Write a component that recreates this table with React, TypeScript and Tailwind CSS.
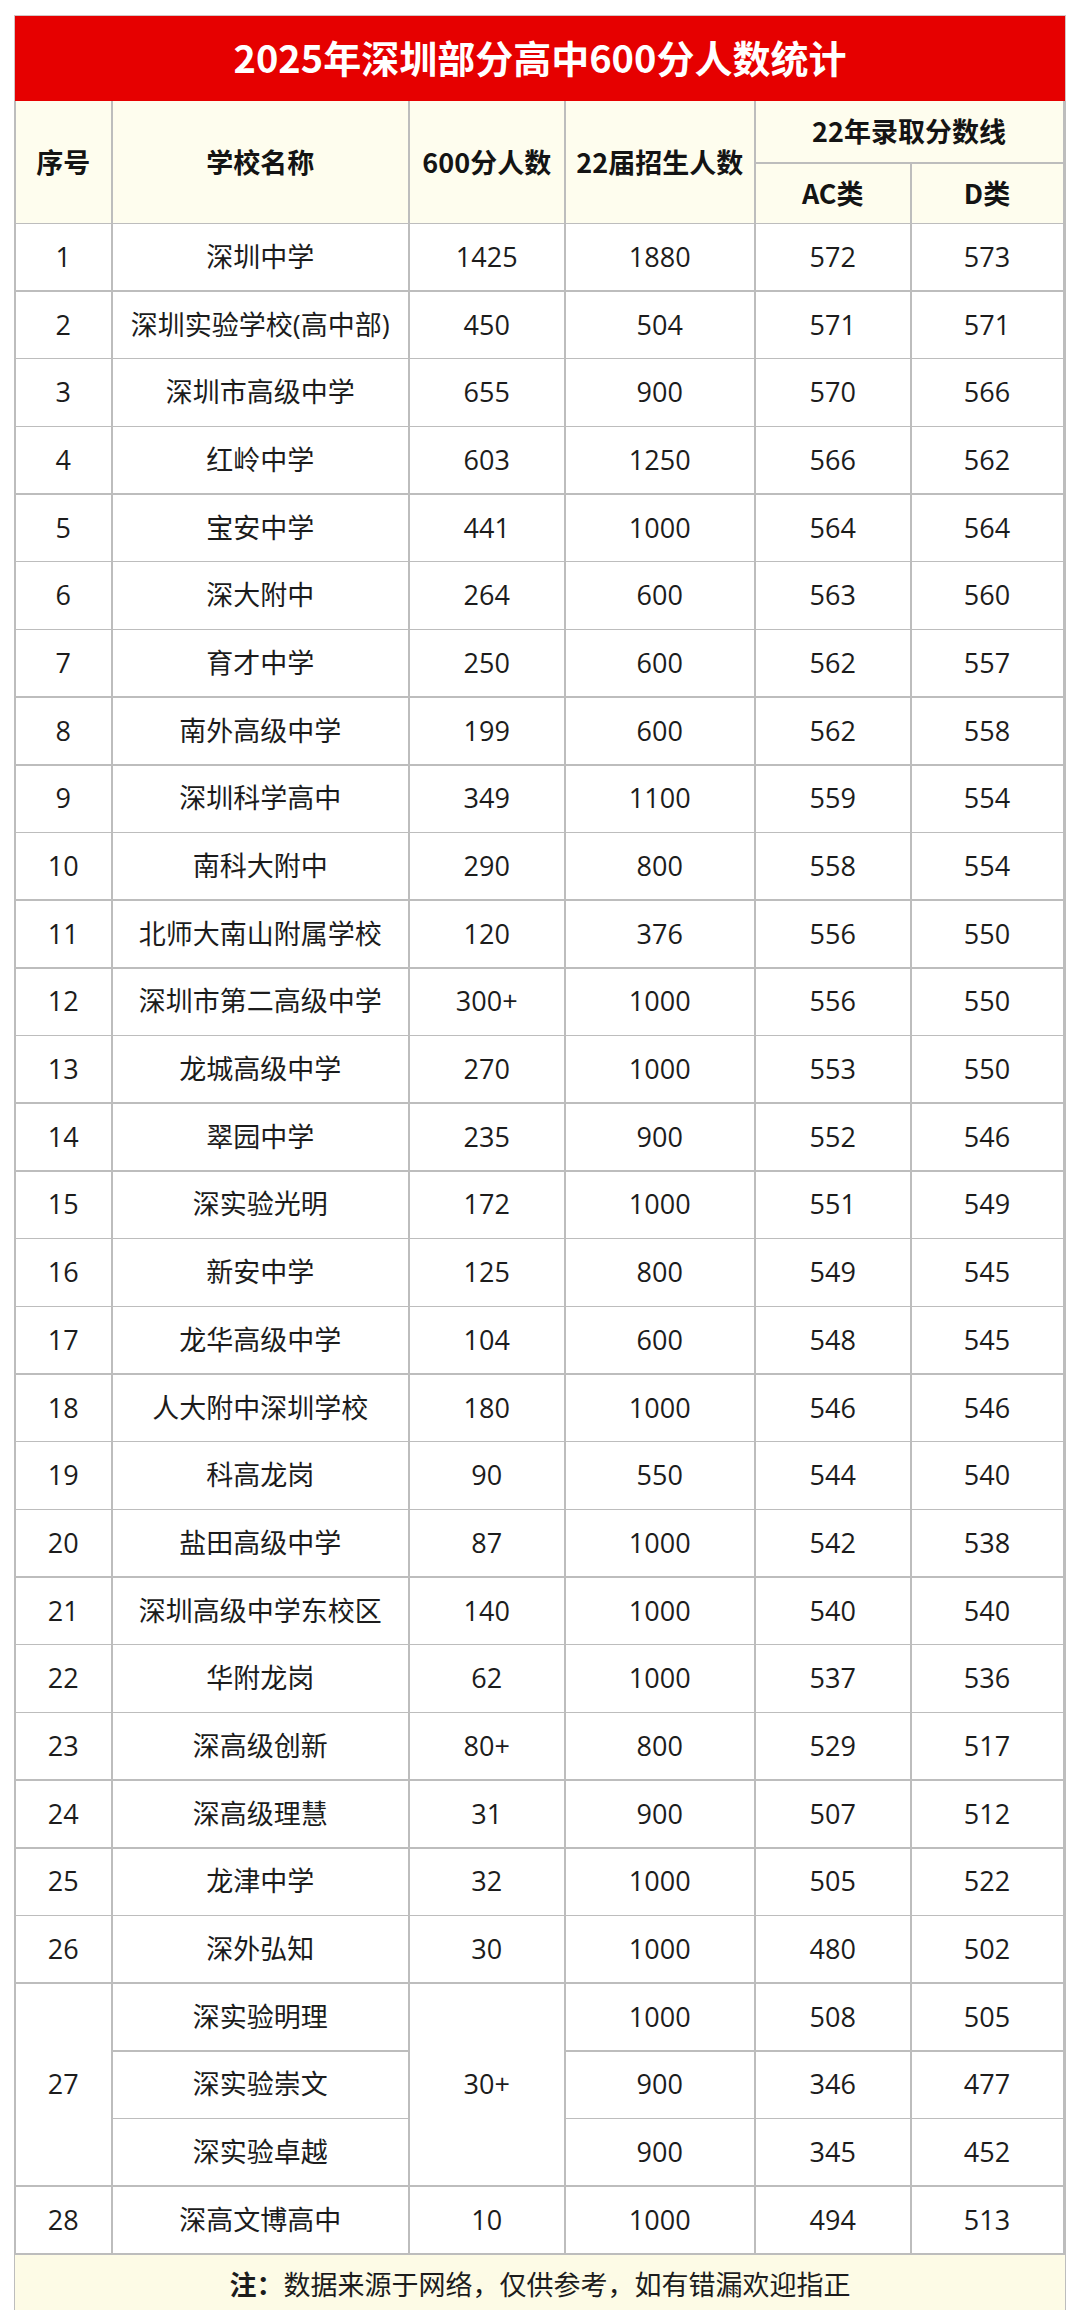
import React from "react";

type Row = { no: string; name: string; n600: string; quota: string; ac: string; d: string };

const rows: Row[] = [
  { no: "1", name: "深圳中学", n600: "1425", quota: "1880", ac: "572", d: "573" },
  { no: "2", name: "深圳实验学校(高中部)", n600: "450", quota: "504", ac: "571", d: "571" },
  { no: "3", name: "深圳市高级中学", n600: "655", quota: "900", ac: "570", d: "566" },
  { no: "4", name: "红岭中学", n600: "603", quota: "1250", ac: "566", d: "562" },
  { no: "5", name: "宝安中学", n600: "441", quota: "1000", ac: "564", d: "564" },
  { no: "6", name: "深大附中", n600: "264", quota: "600", ac: "563", d: "560" },
  { no: "7", name: "育才中学", n600: "250", quota: "600", ac: "562", d: "557" },
  { no: "8", name: "南外高级中学", n600: "199", quota: "600", ac: "562", d: "558" },
  { no: "9", name: "深圳科学高中", n600: "349", quota: "1100", ac: "559", d: "554" },
  { no: "10", name: "南科大附中", n600: "290", quota: "800", ac: "558", d: "554" },
  { no: "11", name: "北师大南山附属学校", n600: "120", quota: "376", ac: "556", d: "550" },
  { no: "12", name: "深圳市第二高级中学", n600: "300+", quota: "1000", ac: "556", d: "550" },
  { no: "13", name: "龙城高级中学", n600: "270", quota: "1000", ac: "553", d: "550" },
  { no: "14", name: "翠园中学", n600: "235", quota: "900", ac: "552", d: "546" },
  { no: "15", name: "深实验光明", n600: "172", quota: "1000", ac: "551", d: "549" },
  { no: "16", name: "新安中学", n600: "125", quota: "800", ac: "549", d: "545" },
  { no: "17", name: "龙华高级中学", n600: "104", quota: "600", ac: "548", d: "545" },
  { no: "18", name: "人大附中深圳学校", n600: "180", quota: "1000", ac: "546", d: "546" },
  { no: "19", name: "科高龙岗", n600: "90", quota: "550", ac: "544", d: "540" },
  { no: "20", name: "盐田高级中学", n600: "87", quota: "1000", ac: "542", d: "538" },
  { no: "21", name: "深圳高级中学东校区", n600: "140", quota: "1000", ac: "540", d: "540" },
  { no: "22", name: "华附龙岗", n600: "62", quota: "1000", ac: "537", d: "536" },
  { no: "23", name: "深高级创新", n600: "80+", quota: "800", ac: "529", d: "517" },
  { no: "24", name: "深高级理慧", n600: "31", quota: "900", ac: "507", d: "512" },
  { no: "25", name: "龙津中学", n600: "32", quota: "1000", ac: "505", d: "522" },
  { no: "26", name: "深外弘知", n600: "30", quota: "1000", ac: "480", d: "502" },
];

// 27 is one number spread over three campuses
const group27 = [
  { name: "深实验明理", quota: "1000", ac: "508", d: "505" },
  { name: "深实验崇文", quota: "900", ac: "346", d: "477" },
  { name: "深实验卓越", quota: "900", ac: "345", d: "452" },
];

const last: Row = { no: "28", name: "深高文博高中", n600: "10", quota: "1000", ac: "494", d: "513" };

const cell = "flex items-center justify-center bg-white text-[27px] text-[#1c1c1c]";
const head = "flex items-center justify-center bg-[#fefdee] text-[27px] font-bold text-[#141414]";

function Cells({ r }: { r: Row }) {
  return (
    <>
      <div className={cell}>{r.no}</div>
      <div className={cell}>{r.name}</div>
      <div className={cell}>{r.n600}</div>
      <div className={cell}>{r.quota}</div>
      <div className={cell}>{r.ac}</div>
      <div className={cell}>{r.d}</div>
    </>
  );
}

export default function App() {
  return (
    <div
      className="h-[2324px] w-[1080px] bg-white px-[14px] pt-[15px]"
      style={{ fontFamily: '"Open Sans", "Noto Sans CJK SC", sans-serif' }}
    >
      <div className="flex h-[86px] items-center justify-center border-x border-t border-[#d4c4c4] bg-[#e60000]">
        <h1
          className="pb-1 text-[38px] font-bold leading-none text-white"
          style={{ fontFamily: '"Noto Sans CJK SC", sans-serif' }}
        >
          2025年深圳部分高中600分人数统计
        </h1>
      </div>

      <div className="grid grid-cols-[95.5px_295.5px_154.5px_188.5px_154.5px_151px] grid-rows-[61px_59px_repeat(30,66.2px)] gap-[1.5px] bg-[#bdbdbd] px-[1.5px] pb-[1.5px]">
        <div className={head + " row-span-2"} style={{ fontFamily: '"Noto Sans CJK SC", sans-serif' }}>序号</div>
        <div className={head + " row-span-2"} style={{ fontFamily: '"Noto Sans CJK SC", sans-serif' }}>学校名称</div>
        <div className={head + " row-span-2"} style={{ fontFamily: '"Noto Sans CJK SC", sans-serif' }}>600分人数</div>
        <div className={head + " row-span-2"} style={{ fontFamily: '"Noto Sans CJK SC", sans-serif' }}>22届招生人数</div>
        <div className={head + " col-span-2"} style={{ fontFamily: '"Noto Sans CJK SC", sans-serif' }}>22年录取分数线</div>
        <div className={head} style={{ fontFamily: '"Noto Sans CJK SC", sans-serif' }}>AC类</div>
        <div className={head} style={{ fontFamily: '"Noto Sans CJK SC", sans-serif' }}>D类</div>

        {rows.map((r) => (
          <Cells key={r.no} r={r} />
        ))}

        <div className={cell + " row-span-3"}>27</div>
        <div className={cell}>{group27[0].name}</div>
        <div className={cell + " row-span-3"}>30+</div>
        <div className={cell}>{group27[0].quota}</div>
        <div className={cell}>{group27[0].ac}</div>
        <div className={cell}>{group27[0].d}</div>
        {group27.slice(1).map((g) => (
          <React.Fragment key={g.name}>
            <div className={cell}>{g.name}</div>
            <div className={cell}>{g.quota}</div>
            <div className={cell}>{g.ac}</div>
            <div className={cell}>{g.d}</div>
          </React.Fragment>
        ))}

        <Cells r={last} />
      </div>

      <div
        className="flex h-[55px] items-center justify-center border-x-[1.5px] border-[#bdbdbd] bg-[#fdfbe6] pt-1 text-[27px] text-[#1c1c1c]"
        style={{ fontFamily: '"Noto Sans CJK SC", sans-serif' }}
      >
        <span className="font-bold">注：</span>
        <span>数据来源于网络，仅供参考，如有错漏欢迎指正</span>
      </div>
    </div>
  );
}
